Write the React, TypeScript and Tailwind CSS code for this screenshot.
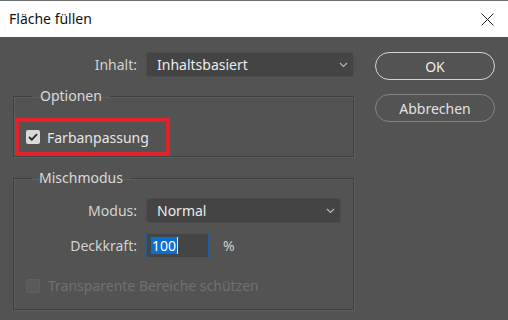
import React from "react";

const font = { fontFamily: '"Noto Sans", "Open Sans", sans-serif' };

function Chevron() {
  return (
    <svg width="9" height="6" viewBox="0 0 9 6" className="shrink-0">
      <path d="M1 1 L4.5 4.5 L8 1" fill="none" stroke="#b8b8b8" strokeWidth="1.1" />
    </svg>
  );
}

function Select({ value, w }: { value: string; w: string }) {
  return (
    <div className={`${w} h-[25px] flex items-center justify-between pl-[10px] pr-[5px] bg-[#444444] border border-[#4c4c4c] rounded-[3px] text-[#ebebeb] text-[14px]`}>
      <span>{value}</span>
      <Chevron />
    </div>
  );
}

export default function App() {
  return (
    <div className="w-[508px] h-[320px] bg-[#535353] flex flex-col overflow-hidden select-none" style={font}>
      <div className="h-[37px] shrink-0 bg-white border-t border-[#6f6f6f] flex items-center justify-between pl-[9px] pr-[14px]">
        <span className="text-[14px] text-[#111] leading-none pb-[1px]">Fläche füllen</span>
        <svg width="13" height="13" viewBox="0 0 13 13">
          <path d="M0.5 0.5 L12.5 12.5 M12.5 0.5 L0.5 12.5" stroke="#222" strokeWidth="1" />
        </svg>
      </div>
      <div className="flex pl-[13px] pt-[15px]">
        <div className="w-[341px] flex flex-col">
          <div className="flex items-center gap-[9px]">
            <span className="w-[124px] text-right text-[14px] text-[#d2d2d2]">Inhalt:</span>
            <Select value="Inhaltsbasiert" w="w-[208px]" />
          </div>

          <fieldset className="mt-[9px] border border-[#404040] shadow-[inset_1px_1px_0_#5d5d5d,1px_1px_0_#5d5d5d] pl-[1px] pr-0 pt-[12px] pb-0 min-w-0">
            <legend className="ml-[17px] px-[8px] text-[14px] leading-[20px] text-[#dadada]">Optionen</legend>
            <div className="w-[155px] h-[38px] border-[4px] border-[#e2222a] flex items-center pl-[7px] gap-[7px]">
              <div className="w-[14px] h-[14px] rounded-[2px] bg-[#d9d9d9] flex items-center justify-center">
                <svg width="10" height="8" viewBox="0 0 10 8">
                  <path d="M1 4 L3.8 6.6 L9 1.2" fill="none" stroke="#2a2a2a" strokeWidth="1.9" />
                </svg>
              </div>
              <span className="text-[14px] text-[#e6e6e6]">Farbanpassung</span>
            </div>
          </fieldset>

          <fieldset className="mt-[11px] border border-[#404040] shadow-[inset_1px_1px_0_#5d5d5d,1px_1px_0_#5d5d5d] pl-0 pr-0 pt-[10px] pb-[13px] min-w-0">
            <legend className="ml-[18px] px-[7px] text-[14px] leading-[20px] text-[#dadada]">Mischmodus</legend>
            <div className="flex items-center gap-[9px]">
              <span className="w-[123px] text-right text-[14px] text-[#d2d2d2]">Modus:</span>
              <Select value="Normal" w="w-[195px]" />
            </div>
            <div className="flex items-center gap-[9px] mt-[10px]">
              <span className="w-[123px] text-right text-[14px] text-[#d2d2d2]">Deckkraft:</span>
              <div className="w-[63px] h-[25px] bg-[#454545] border-[1.5px] border-[#1f5c9e] flex items-center pl-[4px]">
                <span className="bg-[#0b6fd0] text-white text-[14px] leading-[17px] px-[1px]">100</span>
                <span className="w-[1px] h-[17px] bg-[#e8e8e8]" />
              </div>
              <span className="ml-[5px] text-[14px] text-[#d2d2d2]">%</span>
            </div>
            <div className="flex items-center gap-[8px] pl-[12px] mt-[17px]">
              <div className="w-[14px] h-[14px] rounded-[2px] bg-[#5a5a5a] border border-[#606060]" />
              <span className="text-[14px] text-[#707070]">Transparente Bereiche schützen</span>
            </div>
          </fieldset>
        </div>

        <div className="ml-[21px] w-[120px] flex flex-col gap-[14px]">
          <div className="h-[28px] rounded-full border-[1.5px] border-[#d4d4d4] flex items-center justify-center text-[14px] text-[#ececec]">OK</div>
          <div className="h-[28px] rounded-full border-[1.5px] border-[#858585] flex items-center justify-center text-[14px] text-[#e2e2e2]">Abbrechen</div>
        </div>
      </div>
    </div>
  );
}
